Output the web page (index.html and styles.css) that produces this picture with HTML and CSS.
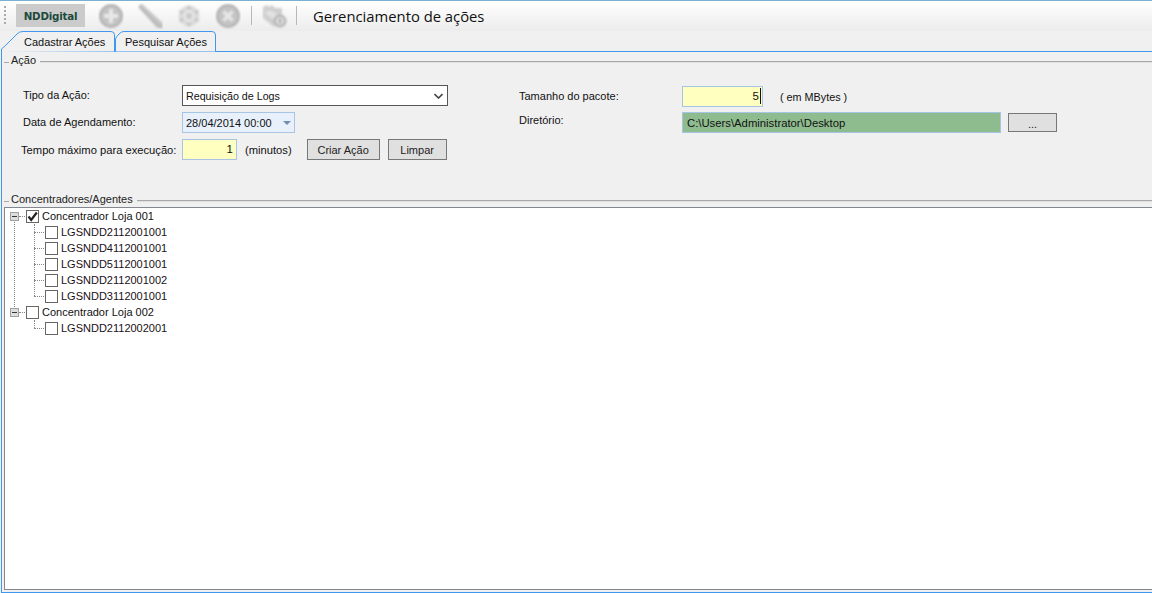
FILE: index.html
```html
<!DOCTYPE html>
<html lang="pt">
<head>
<meta charset="utf-8">
<title>Gerenciamento de ações</title>
<link rel="stylesheet" href="styles.css">
</head>
<body>
<div class="app">
  <header class="toolbar">
    <span class="grip"></span>
    <span class="logo">NDDigital</span>
    <svg class="icon first" width="26" height="26" viewBox="0 0 26 26"><g class="soft"><circle cx="13" cy="13" r="11" fill="#c4c4c4" stroke="#a6a6a6" stroke-width="1.500"/><path d="M13 6v14M6 13h14" stroke="#e8e8e8" stroke-width="4"/></g></svg>
    <svg class="icon" width="26" height="26" viewBox="0 0 26 26"><g class="soft"><path d="M1.500 4 4.500 1 25 20 25 25 20 24Z" fill="#bcbcbc" stroke="#a8a8a8" stroke-width=".6"/><path d="M4 2 24 21" stroke="#e0e0e0" stroke-width="1"/></g></svg>
    <svg class="icon" width="26" height="26" viewBox="0 0 26 26"><g class="soft"><circle cx="13" cy="13" r="10.500" fill="#dcdcdc"/><path d="M13 2l3 4h-6zM13 24l3-4h-6zM3 7l5 1-3 4zM23 7l-5 1 3 4zM3 19l5-1-3-4zM23 19l-5-1 3-4z" fill="#c4c4c4"/><circle cx="13" cy="13" r="4" fill="#cacaca" stroke="#eee" stroke-width="1.500"/></g></svg>
    <svg class="icon" width="26" height="26" viewBox="0 0 26 26"><g class="soft"><circle cx="13" cy="13" r="11" fill="#c4c4c4" stroke="#a6a6a6" stroke-width="1.500"/><path d="M8.500 8.500l9 9M17.500 8.500l-9 9" stroke="#e8e8e8" stroke-width="3.500"/></g></svg>
    <span class="sep"></span>
    <svg class="icon folder" width="26" height="26" viewBox="0 0 26 26"><g class="soft"><path d="M1 4 5 2l2 2 3-2 3 3h7v10l-8 9L1 15Z" fill="#cfcfcf"/><path d="M4 8h6l8 5-6 4-8-6Z" fill="#e2e2e2"/><circle cx="18" cy="18" r="6.500" fill="#b4b4b4"/><circle cx="18" cy="18" r="4.200" fill="#dedede"/><path d="M18 15.500v5" stroke="#999" stroke-width="1.500"/></g></svg>
    <span class="sep"></span>
    <h1 class="title">Gerenciamento de ações</h1>
  </header>

  <nav class="tabs">
    <div class="tab active">
      <svg class="tab-shape" width="114" height="21" viewBox="0 0 114 21"><path d="M.5 21V18Q3 16 6 13L16 3Q18 .5 22 .5H110Q113.500 .5 113.500 4V20.500" fill="#f0f0f0" stroke="#3f97ee"/></svg>
      <span class="tab-text">Cadastrar Ações</span>
    </div>
    <div class="tab second">
      <svg class="tab-shape" width="102" height="21" viewBox="0 0 102 21"><path d="M.5 20.500V8Q1 6 4 3Q6 .5 9 .5H97Q100.500 .5 100.500 4V20.500" fill="#f0f0f0" stroke="#3f97ee"/></svg>
      <span class="tab-text">Pesquisar Ações</span>
    </div>
  </nav>

  <main class="panel">
    <div class="legend"><span class="legend-text">Ação</span></div>
    <section class="form">
      <div class="col-left">
        <div class="row">
          <label class="label">Tipo da Ação:</label>
          <div class="select"><span>Requisição de Logs</span><svg width="9" height="6" viewBox="0 0 9 6"><path d="M.5 1 4.500 5 8.500 1" fill="none" stroke="#444" stroke-width="1.600"/></svg></div>
        </div>
        <div class="row">
          <label class="label">Data de Agendamento:</label>
          <div class="date"><span>28/04/2014 00:00</span><i class="caret"></i></div>
        </div>
        <div class="row">
          <label class="label tight">Tempo máximo para execução:</label>
          <div class="num small">1</div>
          <span class="unit">(minutos)</span>
          <button class="btn create">Criar Ação</button>
          <button class="btn clear">Limpar</button>
        </div>
      </div>
      <div class="col-right">
        <div class="row lowered">
          <label class="label wide">Tamanho do pacote:</label>
          <div class="num big"><span class="val">5</span></div>
          <span class="unit mb">( em MBytes )</span>
        </div>
        <div class="row">
          <label class="label wide up">Diretório:</label>
          <div class="path">C:\Users\Administrator\Desktop</div>
          <button class="btn dots">...</button>
        </div>
      </div>
    </section>

    <div class="legend"><span class="legend-text">Concentradores/Agentes</span></div>
    <section class="tree">
      <div class="node">
        <div class="item root has-kids">
          <span class="exp"></span>
          <span class="cb"><svg width="11" height="11" viewBox="0 0 11 11"><path d="M1.500 5.500 4.200 9 9.800 1.500" fill="none" stroke="#222" stroke-width="2.200"/></svg></span>
          <span>Concentrador Loja 001</span>
        </div>
        <div class="kids">
          <div class="item leaf"><span class="cb"></span><span>LGSNDD2112001001</span></div>
          <div class="item leaf"><span class="cb"></span><span>LGSNDD4112001001</span></div>
          <div class="item leaf"><span class="cb"></span><span>LGSNDD5112001001</span></div>
          <div class="item leaf"><span class="cb"></span><span>LGSNDD2112001002</span></div>
          <div class="item leaf"><span class="cb"></span><span>LGSNDD3112001001</span></div>
        </div>
      </div>
      <div class="node">
        <div class="item root">
          <span class="exp"></span>
          <span class="cb"></span>
          <span>Concentrador Loja 002</span>
        </div>
        <div class="kids">
          <div class="item leaf"><span class="cb"></span><span>LGSNDD2112002001</span></div>
        </div>
      </div>
    </section>
  </main>
</div>
</body>
</html>
```

FILE: styles.css
```css
* { box-sizing: border-box; }
html, body { margin: 0; height: 100%; overflow: hidden; }
body { font: 11px/16px "Liberation Sans", Arial, sans-serif; color: #111; background: #f0f0f0; }
.app { height: 593px; display: flex; flex-direction: column; }

.toolbar {
  height: 31px; flex: none; display: flex; align-items: center;
  border-top: 1px solid #7bb0d0;
  background: linear-gradient(#fff, #ececec);
  padding-left: 4px; padding-bottom: 1px;
}
.grip { width: 2px; height: 20px; margin-right: 10px; background: repeating-linear-gradient(#aaa 0 2px, transparent 2px 4px); }
.logo {
  width: 69px; height: 23px; background: #cbcbcb; color: #1c4a3c;
  font: bold 10.300px/24px "DejaVu Sans", sans-serif; text-align: center; letter-spacing: -.2px;
}
.icon { flex: none; margin-right: 13px; margin-top: 1px; }
.icon.first { margin-left: 13px; }
.icon.folder { margin-right: 8px; margin-left: 10px; }
.soft { filter: blur(.8px); }
.sep { width: 1px; height: 19px; background: #b8b8b8; flex: none; }
.icon + .sep { margin-left: -3px; }
.folder + .sep { margin-left: 0; }
.title { margin: 0 0 0 16px; font: 400 14.800px/20px "Open Sans", "Liberation Sans", sans-serif; color: #111; }

.tabs { height: 21px; flex: none; display: flex; padding-left: 1px; position: relative; z-index: 1; }
.tab { position: relative; height: 21px; }
.tab.active { width: 114px; }
.tab.second { width: 102px; height: 20px; }
.tab-shape { position: absolute; left: 0; top: 0; display: block; }
.tab-text { position: relative; display: block; line-height: 23px; }
.active .tab-text { padding-left: 23px; }
.second .tab-text { padding-left: 10px; }

.panel {
  flex: 1; min-height: 0; display: flex; flex-direction: column;
  margin-left: 1px; margin-top: -1px;
  border-left: 1px solid #3f97ee; border-top: 1px solid #3f97ee; border-bottom: 1px solid #3f97ee;
  padding: 0 0 2px 2px;
}
.legend { display: flex; align-items: center; height: 16px; flex: none; color: #222; }
.legend::before { content: ""; width: 5px; flex: none; margin: 4px 2px 0 0; border-top: 1px solid #a8a8a8; }
.legend-text { white-space: nowrap; }
.legend::after { content: ""; flex: 1; margin: 4px 0 0 4px; border-top: 1px solid #a8a8a8; border-bottom: 1px solid #e0e0e0; }

.form { height: 123px; flex: none; display: flex; padding-top: 17px; }
.col-left { width: 514px; flex: none; padding-left: 18px; }
.col-right { flex: 1; }
.row { display: flex; align-items: center; height: 21px; margin-bottom: 6px; }
.row.lowered { position: relative; top: 1px; }
.label { width: 160px; flex: none; padding: 0 0 2px 1px; }
.label.tight { margin-left: -1px; width: 161px; padding: 0; white-space: nowrap; font-size: 11.200px; }
.label.wide { width: 164px; }
.label.up { padding-bottom: 6px; }

.select {
  width: 266px; height: 21px; background: #fff; border: 1px solid #555;
  display: flex; align-items: center; justify-content: space-between; padding: 0 4px 0 3px;
  font-size: 10.700px;
}
.date {
  width: 113px; height: 21px; background: #e8f1fb; border: 1px solid #a8c4e4;
  display: flex; align-items: center; justify-content: space-between; padding: 0 3px 0 3px;
}
.caret { width: 0; height: 0; border: 4px solid transparent; border-top: 4px solid #6f8db5; border-bottom: 0; }
.num { height: 21px; background: #ffffc0; border: 1px solid #a8c4e4; text-align: right; line-height: 19px; font-size: 11.500px; }
.num.small { width: 55px; padding-right: 3px; }
.num.big { width: 81px; padding-right: 1px; }
.val { border-right: 1px solid #111; padding-right: 1px; display: inline-block; height: 16px; line-height: 16px; }
.unit { margin-left: 8px; font-size: 11.200px; }
.unit.mb { margin-left: 17px; font-size: 10.800px; }
.btn {
  height: 21px; background: #e0e0e0; border: 1px solid #777; padding: 0; margin: 0;
  font: 11px "Liberation Sans", Arial, sans-serif; color: #222;
}
.btn.create { width: 73px; margin-left: 15px; }
.btn.clear { width: 59px; margin-left: 8px; }
.path { width: 319px; height: 21px; background: #8fbc8f; border: 1px solid #a8c4e4; padding-left: 4px; line-height: 20px; font-size: 11.300px; }
.btn.dots { width: 49px; height: 19px; margin-left: 7px; line-height: 12px; padding-top: 2px; }

.tree { flex: 1; min-height: 0; background: #fff; border: 1px solid #828790; border-right: 0; }
.item { display: flex; align-items: center; height: 16px; position: relative; white-space: nowrap; }
.root { padding-left: 5px; }
.exp { width: 9px; height: 9px; border: 1px solid #a0a0a0; background: linear-gradient(#333, #333) center/5px 1px no-repeat #dedede; margin-right: 7px; flex: none; position: relative; z-index: 1; }
.cb { width: 13px; height: 13px; border: 1px solid #666; background: #fff; flex: none; margin-right: 3px; display: flex; align-items: center; justify-content: center; }
.kids { position: relative; }
.leaf { padding-left: 40px; color: #201018; }
.leaf::before { content: ""; position: absolute; left: 29px; width: 10px; top: 8px; border-top: 1px dotted #888; }
.leaf::after { content: ""; position: absolute; left: 29px; top: 0; height: 8px; border-left: 1px dotted #888; }
.leaf + .leaf::after { top: -8px; height: 16px; }
.has-kids::after { content: ""; position: absolute; left: 9px; top: 12px; height: 87px; border-left: 1px dotted #888; }
.root::before { content: ""; position: absolute; left: 14px; width: 6px; top: 8px; border-top: 1px dotted #888; }
```
